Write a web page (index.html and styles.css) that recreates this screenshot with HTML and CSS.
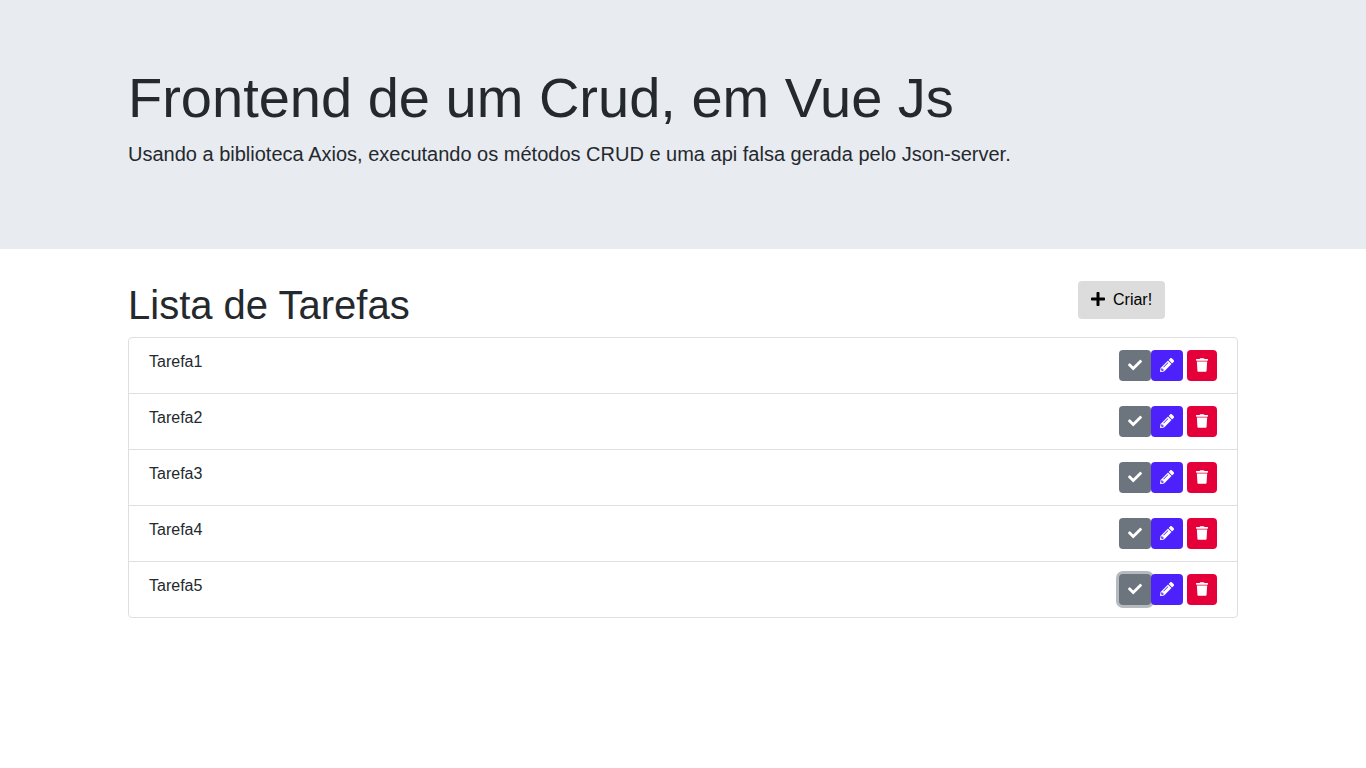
FILE: index.html
```html
<!DOCTYPE html>
<html lang="pt-BR">
<head>
<meta charset="utf-8">
<meta name="viewport" content="width=device-width, initial-scale=1">
<title>Crud Vue Js</title>
<link rel="stylesheet" href="styles.css">
</head>
<body>
<svg class="sprite" aria-hidden="true">
  <symbol id="check" viewBox="0 0 512 512"><path d="M173.898 439.404l-166.4-166.4c-9.997-9.997-9.997-26.206 0-36.204l36.203-36.204c9.997-9.998 26.207-9.998 36.204 0L192 312.69 432.095 72.596c9.997-9.997 26.207-9.997 36.204 0l36.203 36.204c9.997 9.997 9.997 26.206 0 36.204l-294.4 294.401c-9.998 9.997-26.207 9.997-36.204-.001z"/></symbol>
  <symbol id="pencil" viewBox="0 0 512 512"><path d="M497.9 142.1l-46.1 46.1c-4.7 4.7-12.3 4.7-17 0l-111-111c-4.7-4.7-4.7-12.3 0-17l46.1-46.1c18.7-18.7 49.1-18.7 67.9 0l60.1 60.1c18.8 18.7 18.8 49.1 0 67.9zM284.2 99.8L21.6 362.4.4 483.9c-2.9 16.4 11.4 30.6 27.8 27.8l121.5-21.3 262.6-262.6c4.7-4.7 4.7-12.3 0-17l-111-111c-4.8-4.7-12.4-4.7-17.1 0zM124.1 339.9c-5.5-5.5-5.5-14.3 0-19.8l154-154c5.5-5.5 14.3-5.5 19.8 0s5.5 14.3 0 19.8l-154 154c-5.5 5.5-14.3 5.5-19.8 0zM88 424h48v36.3l-64.5 11.3-31.1-31.1L51.7 376H88v48z"/></symbol>
  <symbol id="trash" viewBox="0 0 448 512"><path d="M432 32H312l-9.4-18.7A24 24 0 0 0 281.1 0H166.8a23.72 23.72 0 0 0-21.4 13.3L136 32H16A16 16 0 0 0 0 48v32a16 16 0 0 0 16 16h416a16 16 0 0 0 16-16V48a16 16 0 0 0-16-16zM53.2 467a48 48 0 0 0 47.9 45h245.8a48 48 0 0 0 47.9-45L416 128H32z"/></symbol>
  <symbol id="plus" viewBox="0 0 448 512"><path d="M416 208H272V64c0-17.67-14.33-32-32-32h-32c-17.67 0-32 14.33-32 32v144H32c-17.67 0-32 14.33-32 32v32c0 17.67 14.33 32 32 32h144v144c0 17.67 14.33 32 32 32h32c17.67 0 32-14.33 32-32V304h144c17.67 0 32-14.33 32-32v-32c0-17.67-14.33-32-32-32z"/></symbol>
</svg>
<header class="hero">
  <div class="container">
    <h1 class="hero-title">Frontend de um Crud, em Vue Js</h1>
    <p class="hero-lead">Usando a biblioteca Axios, executando os métodos CRUD e uma api falsa gerada pelo Json-server.</p>
  </div>
</header>
<main class="container">
  <div class="heading">
    <h2 class="heading-title">Lista de Tarefas</h2>
    <div class="heading-action">
      <button class="btn btn-create" type="button"><svg class="icon" aria-hidden="true"><use href="#plus"/></svg>Criar!</button>
    </div>
  </div>
  <ul class="tasks">
    <li class="task"><span>Tarefa1</span><div class="actions">
      <button class="btn btn-small btn-done" type="button" aria-label="Concluir"><svg class="icon" aria-hidden="true"><use href="#check"/></svg></button>
      <button class="btn btn-small btn-edit" type="button" aria-label="Editar"><svg class="icon" aria-hidden="true"><use href="#pencil"/></svg></button>
      <button class="btn btn-small btn-delete" type="button" aria-label="Excluir"><svg class="icon" aria-hidden="true"><use href="#trash"/></svg></button>
    </div></li>
    <li class="task"><span>Tarefa2</span><div class="actions">
      <button class="btn btn-small btn-done" type="button" aria-label="Concluir"><svg class="icon" aria-hidden="true"><use href="#check"/></svg></button>
      <button class="btn btn-small btn-edit" type="button" aria-label="Editar"><svg class="icon" aria-hidden="true"><use href="#pencil"/></svg></button>
      <button class="btn btn-small btn-delete" type="button" aria-label="Excluir"><svg class="icon" aria-hidden="true"><use href="#trash"/></svg></button>
    </div></li>
    <li class="task"><span>Tarefa3</span><div class="actions">
      <button class="btn btn-small btn-done" type="button" aria-label="Concluir"><svg class="icon" aria-hidden="true"><use href="#check"/></svg></button>
      <button class="btn btn-small btn-edit" type="button" aria-label="Editar"><svg class="icon" aria-hidden="true"><use href="#pencil"/></svg></button>
      <button class="btn btn-small btn-delete" type="button" aria-label="Excluir"><svg class="icon" aria-hidden="true"><use href="#trash"/></svg></button>
    </div></li>
    <li class="task"><span>Tarefa4</span><div class="actions">
      <button class="btn btn-small btn-done" type="button" aria-label="Concluir"><svg class="icon" aria-hidden="true"><use href="#check"/></svg></button>
      <button class="btn btn-small btn-edit" type="button" aria-label="Editar"><svg class="icon" aria-hidden="true"><use href="#pencil"/></svg></button>
      <button class="btn btn-small btn-delete" type="button" aria-label="Excluir"><svg class="icon" aria-hidden="true"><use href="#trash"/></svg></button>
    </div></li>
    <li class="task"><span>Tarefa5</span><div class="actions">
      <button class="btn btn-small btn-done is-focused" type="button" aria-label="Concluir"><svg class="icon" aria-hidden="true"><use href="#check"/></svg></button>
      <button class="btn btn-small btn-edit" type="button" aria-label="Editar"><svg class="icon" aria-hidden="true"><use href="#pencil"/></svg></button>
      <button class="btn btn-small btn-delete" type="button" aria-label="Excluir"><svg class="icon" aria-hidden="true"><use href="#trash"/></svg></button>
    </div></li>
  </ul>
</main>
</body>
</html>
```
FILE: styles.css
```css
* {
  box-sizing: border-box;
}

body {
  margin: 0;
  background: #fff;
  color: #24292e;
  font: 16px/24px "Liberation Sans", Arial, sans-serif;
}

.sprite {
  display: none;
}

.container {
  max-width: 1140px;
  margin: 0 auto;
  padding: 0 15px;
}

.hero {
  margin-bottom: 32px;
  padding: 64px 0;
  background: #e8ebf0;
}

.hero-title {
  margin: 0 0 8px;
  font-size: 56px;
  font-weight: 400;
  line-height: 67px;
}

.hero-lead {
  margin: 0 0 16px;
  font-size: 20px;
  line-height: 30px;
}

.heading {
  display: grid;
  grid-template-columns: 5fr 1fr;
  margin: 0 -15px 8px;
}

.heading-title {
  margin: 0;
  padding: 0 15px;
  font-size: 40px;
  font-weight: 400;
  line-height: 48px;
}

.heading-action {
  padding: 0 15px;
}

.btn {
  display: inline-flex;
  align-items: center;
  gap: 8px;
  margin: 0;
  padding: 6px 12px;
  border: 1px solid transparent;
  border-radius: 4px;
  font: inherit;
  cursor: pointer;
}

.btn-create {
  background: #dcdcdc;
  color: #000;
}

.icon {
  width: 14px;
  height: 16px;
  margin-bottom: 2px;
  fill: currentColor;
}

.tasks {
  margin: 0;
  padding: 0;
  border: 1px solid #dfdfdf;
  border-radius: 4px;
  list-style: none;
}

.task {
  display: flex;
  justify-content: space-between;
  padding: 12px 20px;
}

.task + .task {
  border-top: 1px solid #dfdfdf;
}

.actions {
  display: flex;
}

.btn-small {
  height: 31px;
  padding: 0 8px;
  color: #fff;
}

.btn-small .icon {
  height: 14px;
}

.btn-done {
  background: #6c757d;
}

.btn-done.is-focused {
  box-shadow: 0 0 0 3px #b5babe;
}

.btn-edit {
  z-index: 1;
  background: #4d21fc;
}

.btn-delete {
  margin-left: 4px;
  background: #e60039;
}

.btn-delete .icon {
  width: 12px;
}
```
